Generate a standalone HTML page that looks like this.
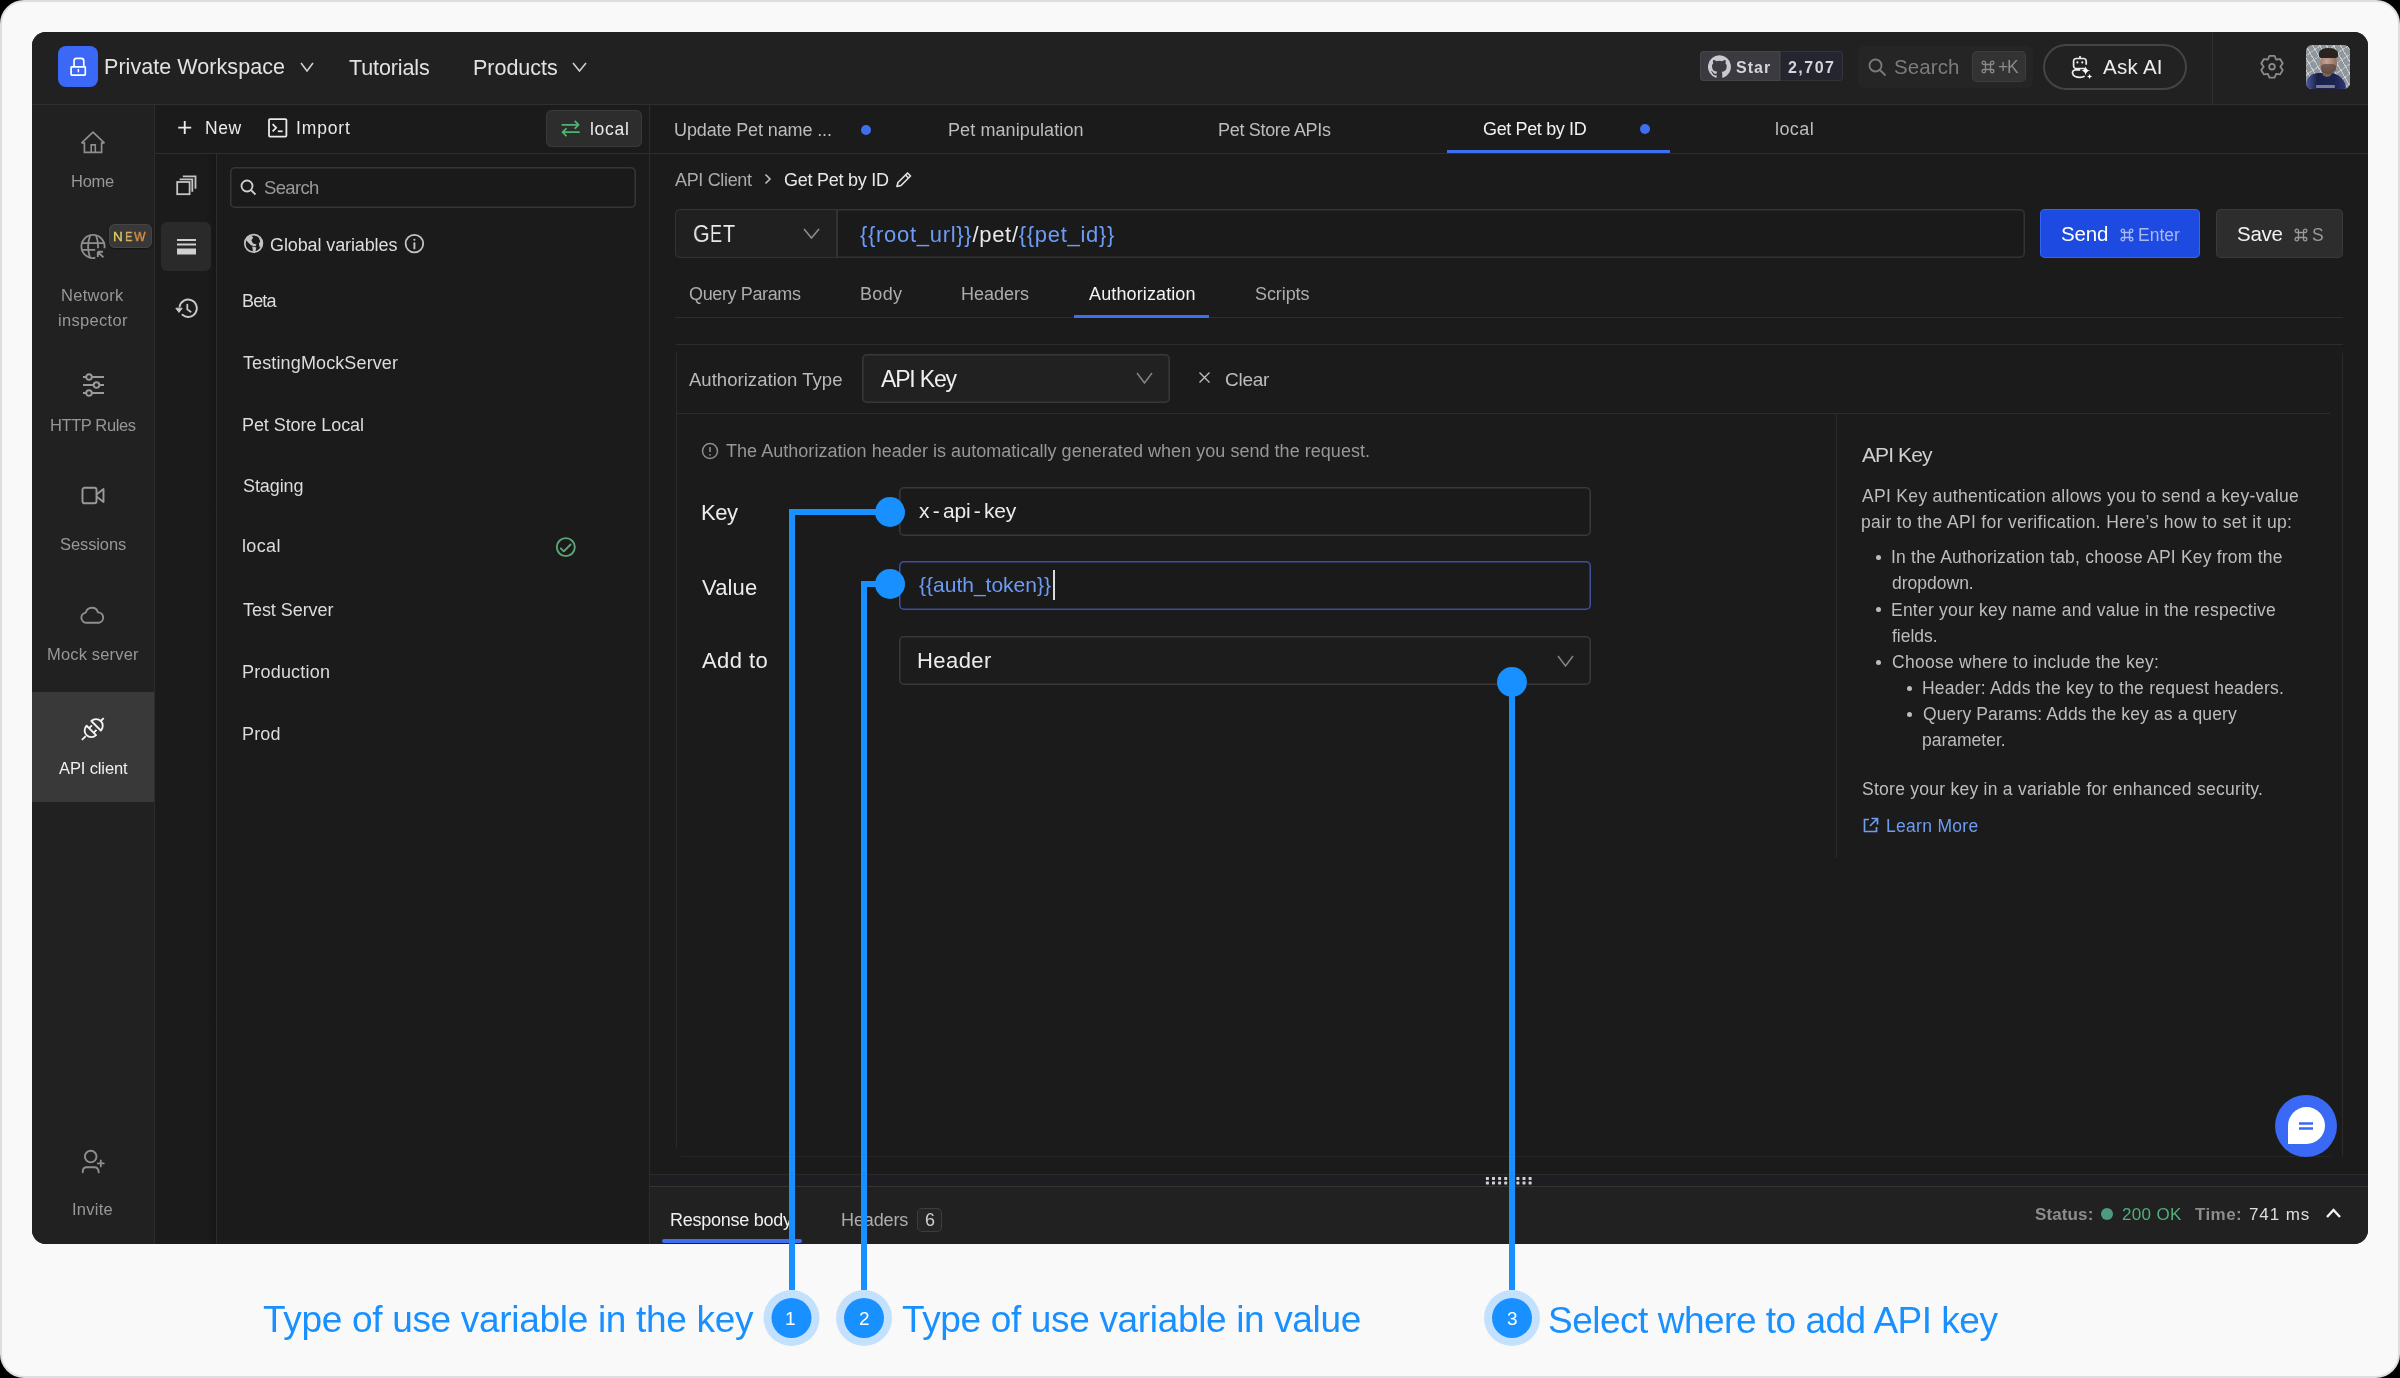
<!DOCTYPE html>
<html><head><meta charset="utf-8"><style>
html,body{margin:0;padding:0;width:2400px;height:1378px;overflow:hidden;background:#000;}
body{position:relative;font-family:"Liberation Sans",sans-serif;}
body>div,body>svg{position:absolute;}
.t{white-space:pre;will-change:transform;-webkit-font-smoothing:antialiased;}
</style></head><body>
<div style="left:0px;top:0px;width:2400px;height:1378px;background:#f9f9f9;border-radius:24px;box-sizing:border-box;border:2px solid #dedede"></div>
<div style="left:32px;top:32px;width:2336px;height:1212px;background:#1b1b1b;border-radius:14px;overflow:hidden"></div>
<div style="left:32px;top:32px;width:2336px;height:72px;background:#212121;border-radius:14px 14px 0 0"></div>
<div style="left:32px;top:104px;width:2336px;height:1px;background:#2f2f2f"></div>
<div style="left:2212px;top:32px;width:1px;height:72px;background:#2f2f2f"></div>
<div style="left:32px;top:105px;width:122px;height:1139px;background:#212121;border-radius:0 0 0 14px"></div>
<div style="left:154px;top:105px;width:1px;height:1139px;background:#2c2c2c"></div>
<div style="left:155px;top:154px;width:61px;height:1090px;background:#1b1b1b"></div>
<div style="left:205px;top:154px;width:11px;height:1090px;background:linear-gradient(90deg,rgba(0,0,0,0),rgba(0,0,0,.18))"></div>
<div style="left:216px;top:154px;width:1px;height:1090px;background:#2c2c2c"></div>
<div style="left:155px;top:105px;width:494px;height:48px;background:#1b1b1b"></div>
<div style="left:155px;top:153px;width:494px;height:1px;background:#2e2e2e"></div>
<div style="left:649px;top:105px;width:1px;height:1139px;background:#2c2c2c"></div>
<div style="left:650px;top:153px;width:1718px;height:1px;background:#2e2e2e"></div>
<div style="left:58px;top:46px;width:40px;height:41px;background:#3b68f6;border-radius:8px"></div>
<svg style="left:66px;top:54px;" width="24" height="26" viewBox="66 54 24 26" fill="none"><path d="M74 66.2V61a2.6 2.6 0 0 1 2.6-2.6h4.6A2.6 2.6 0 0 1 83.8 61v5.2" stroke="#fff" stroke-width="1.7"/><rect x="71.1" y="66.8" width="14.2" height="8.3" rx="0.6" stroke="#fff" stroke-width="1.7"/><path d="M78.4 69.6v2.2" stroke="#fff" stroke-width="1.5" stroke-linecap="round"/></svg>
<div class="t" style="left:104.00px;top:57px;font-size:21.5px;line-height:21.5px;color:#e2e2e2;font-weight:400;letter-spacing:0.058px;">Private Workspace</div>
<svg style="left:300px;top:62px;" width="14" height="10" viewBox="0 0 14 10" fill="none"><path d="M1 1L7.0 9L13 1" stroke="#cfcfcf" stroke-width="1.6" fill="none"/></svg>
<div class="t" style="left:349.00px;top:57.5px;font-size:21.5px;line-height:21.5px;color:#e2e2e2;font-weight:400;letter-spacing:-0.112px;">Tutorials</div>
<div class="t" style="left:473.00px;top:57.5px;font-size:21.5px;line-height:21.5px;color:#e2e2e2;font-weight:400;letter-spacing:-0.014px;">Products</div>
<svg style="left:572px;top:62px;" width="15" height="10" viewBox="0 0 15 10" fill="none"><path d="M1 1L7.5 9L14 1" stroke="#cfcfcf" stroke-width="1.6" fill="none"/></svg>
<div style="left:1700px;top:51px;width:80px;height:30px;background:#3a3a40;border-radius:4px 0 0 4px;box-shadow:inset 0 0 0 1px #44444a"></div>
<div style="left:1780px;top:51px;width:63px;height:30px;background:#25252f;border-radius:0 4px 4px 0;box-shadow:inset 0 0 0 1px #33333a"></div>
<svg style="left:1708px;top:55px;" width="23" height="23" viewBox="0 0 24 24" fill="none"><path fill="#c9c9d0" d="M12 .3a12 12 0 0 0-3.8 23.4c.6.1.8-.3.8-.6v-2c-3.3.7-4-1.6-4-1.6-.6-1.4-1.4-1.8-1.4-1.8-1-.7.1-.7.1-.7 1.2.1 1.8 1.2 1.8 1.2 1 1.8 2.8 1.3 3.5 1 0-.8.4-1.3.7-1.6-2.7-.3-5.5-1.3-5.5-6 0-1.2.5-2.3 1.3-3.1-.2-.4-.6-1.6 0-3.2 0 0 1-.3 3.4 1.2a11.5 11.5 0 0 1 6 0c2.3-1.5 3.3-1.2 3.3-1.2.6 1.6.2 2.8 0 3.2.9.8 1.3 1.9 1.3 3.2 0 4.6-2.8 5.6-5.5 5.9.5.4.9 1 .9 2.2v3.3c0 .3.1.7.8.6A12 12 0 0 0 12 .3"/></svg>
<div class="t" style="left:1736.00px;top:60px;font-size:16px;line-height:16px;color:#d4d4da;font-weight:700;letter-spacing:1.034px;">Star</div>
<div class="t" style="left:1788.00px;top:60px;font-size:16px;line-height:16px;color:#d4d4da;font-weight:700;letter-spacing:1.465px;">2,707</div>
<div style="left:1858px;top:46px;width:175px;height:42px;background:#252525;border-radius:6px"></div>
<svg style="left:1868px;top:58px;" width="19" height="19" viewBox="0 0 19 19" fill="none"><circle cx="7.5" cy="7.5" r="6" stroke="#7a7a7a" stroke-width="1.8"/><path d="M12 12l5.5 5.5" stroke="#7a7a7a" stroke-width="1.8"/></svg>
<div class="t" style="left:1894.00px;top:57.3px;font-size:20.5px;line-height:20.5px;color:#7c7c7c;font-weight:400;letter-spacing:0.090px;">Search</div>
<div style="left:1972px;top:51px;width:54px;height:31px;background:#333333;border-radius:5px;box-shadow:inset 0 0 0 1px #3d3d3d"></div>
<svg style="left:1981px;top:60px;" width="14" height="14" viewBox="0 0 14 14" fill="none"><path d="M4.5 4.5h5v5h-5z M4.5 4.5V2.8a1.7 1.7 0 1 0-1.7 1.7h1.7 M9.5 4.5V2.8a1.7 1.7 0 1 1 1.7 1.7H9.5 M4.5 9.5v1.7a1.7 1.7 0 1 1-1.7-1.7h1.7 M9.5 9.5v1.7a1.7 1.7 0 1 0 1.7-1.7H9.5" stroke="#8a8a8a" stroke-width="1.3"/></svg>
<div class="t" style="left:1997.70px;top:59px;font-size:17.5px;line-height:17.5px;color:#8a8a8a;font-weight:400;letter-spacing:0.000px;">+</div>
<div class="t" style="left:2007.40px;top:59px;font-size:17.5px;line-height:17.5px;color:#8a8a8a;font-weight:400;letter-spacing:0.000px;">K</div>
<div style="left:2043px;top:44px;width:144px;height:46px;border:2px solid #444;border-radius:23px;box-sizing:border-box;background:#222"></div>
<svg style="left:2064px;top:52px;" width="32" height="32" viewBox="2064 52 32 32" fill="none"><path d="M2085 68.5H2076.2A2.6 2.6 0 0 1 2073.6 65.9V61.1A2.6 2.6 0 0 1 2076.2 58.5H2083.6A2.6 2.6 0 0 1 2086.2 61.1V64.8" stroke="#eee" stroke-width="1.7"/><path d="M2080 56v2.5" stroke="#eee" stroke-width="1.7"/><circle cx="2077.4" cy="62.4" r="1.05" fill="#eee"/><circle cx="2082.3" cy="62.4" r="1.05" fill="#eee"/><path d="M2080.2 69.8H2075.4A3 3 0 0 0 2072.6 73.6C2073.4 76.6 2077 77.4 2080 77.4C2082 77.4 2083.6 77 2084.6 76.2" stroke="#eee" stroke-width="1.7"/><path d="M2085.6 66.2Q2086.2 70.2 2090.2 70.6Q2086.2 71.2 2085.6 75.2Q2085 71.2 2081.2 70.6Q2085 70.2 2085.6 66.2Z" fill="#fff"/><path d="M2089.6 74Q2089.9 76.2 2092.2 76.5Q2089.9 76.9 2089.6 79Q2089.2 76.9 2087 76.5Q2089.2 76.2 2089.6 74Z" fill="#fff"/></svg>
<div class="t" style="left:2103.00px;top:56.75px;font-size:20.5px;line-height:20.5px;color:#ececec;font-weight:400;letter-spacing:0.292px;">Ask AI</div>
<svg style="left:2256px;top:50px;" width="32" height="34" viewBox="2256 50 32 34" fill="none"><path d="M2269.48 55.79 L2274.52 55.79 L2276.15 59.51 L2280.19 59.06 L2282.71 63.43 L2280.30 66.70 L2282.71 69.97 L2280.19 74.34 L2276.15 73.89 L2274.52 77.61 L2269.48 77.61 L2267.85 73.89 L2263.81 74.34 L2261.29 69.97 L2263.70 66.70 L2261.29 63.43 L2263.81 59.06 L2267.85 59.51Z" stroke="#8c8c8c" stroke-width="1.8" stroke-linejoin="round"/><circle cx="2272" cy="66.7" r="2.8" stroke="#8c8c8c" stroke-width="1.8"/></svg>
<div style="left:2306px;top:45px;width:44px;height:44px;border-radius:6px;overflow:hidden;background:#8f979c"><div style="position:absolute;left:0px;top:0px;width:44px;height:44px;background:repeating-linear-gradient(60deg,rgba(255,255,255,0) 0 3px,rgba(235,240,242,.6) 3px 4px,rgba(255,255,255,0) 4px 6px),repeating-linear-gradient(-35deg,rgba(255,255,255,0) 0 4px,rgba(225,232,235,.5) 4px 5px,rgba(255,255,255,0) 5px 8px)"></div><div style="position:absolute;left:0px;top:28px;width:40px;height:30px;border-radius:12px 16px 0 0;background:linear-gradient(90deg,#4b5ba2 0,#1a2148 28%,#1c2350 70%,#2f3772 100%)"></div><div style="position:absolute;left:16px;top:23px;width:10px;height:9px;background:#7f6256;border-radius:0 0 5px 5px"></div><div style="position:absolute;left:14px;top:7px;width:17px;height:21px;background:radial-gradient(ellipse at 40% 45%,#c8a596 0,#9d7868 55%,#73554a 100%);border-radius:50% 50% 45% 45%"></div><div style="position:absolute;left:15px;top:19px;width:15px;height:10px;background:#4a3a33;border-radius:30% 30% 50% 50%;opacity:.6"></div><div style="position:absolute;left:13px;top:3px;width:19px;height:10px;background:#2a2420;border-radius:50% 50% 20% 20%"></div><div style="position:absolute;left:10px;top:39.5px;width:19px;height:3.5px;background:#b9bcc8;opacity:.6;border-radius:1px"></div></div>
<svg style="left:76px;top:124px;" width="34" height="34" viewBox="76 124 34 34" fill="none"><path d="M82 142.6L93 132.2l11 10.4" stroke="#8e8e8e" stroke-width="1.7" stroke-linejoin="round" stroke-linecap="round"/><path d="M81.8 142.8h2.6v9.6h17.2v-9.6h2.6" stroke="#8e8e8e" stroke-width="1.7" stroke-linejoin="round"/><path d="M91.2 152.4v-7.5h4.1v7.5" stroke="#8e8e8e" stroke-width="1.6"/></svg>
<div class="t" style="left:71.00px;top:172.5px;font-size:16.5px;line-height:16.5px;color:#979797;font-weight:400;letter-spacing:-0.279px;">Home</div>
<svg style="left:76px;top:226px;" width="36" height="36" viewBox="76 226 36 36" fill="none"><defs><clipPath id="gcl"><path d="M70 220H112V248.2H95.2V270H70z"/></clipPath></defs><g clip-path="url(#gcl)" stroke="#8e8e8e" stroke-width="1.8"><circle cx="93" cy="246.5" r="11.6"/><path d="M81.5 243.2H104.5M81.5 249.9H104.5"/><path d="M90.2 235.2c-2.6 7-2.6 15.6 0 22.8M96 235.2c2.6 7 2.6 15.6 0 22.8"/></g><path d="M97.8 251.8h5.2M97.8 251.8v5.2M98.2 252.2l5.2 5.2" stroke="#8e8e8e" stroke-width="1.9"/></svg>
<div style="left:109px;top:224px;width:43px;height:24px;background:#383838;border-radius:6px;box-shadow:inset 0 0 0 1px #454545,0 1px 2px rgba(0,0,0,.5)"></div>
<div class="t" style="left:112.90px;top:229.9px;font-size:13.5px;line-height:13.5px;color:#e2cf62;font-weight:400;letter-spacing:0.000px;transform:scaleX(1.0);transform-origin:0 0;-webkit-text-stroke:0.3px #e2cf62">N</div>
<div class="t" style="left:124.50px;top:229.9px;font-size:13.5px;line-height:13.5px;color:#d8b060;font-weight:400;letter-spacing:0.000px;transform:scaleX(.82);transform-origin:0 0;-webkit-text-stroke:0.3px #d8b060">E</div>
<div class="t" style="left:133.90px;top:229.9px;font-size:13.5px;line-height:13.5px;color:#e49148;font-weight:400;letter-spacing:0.000px;transform:scaleX(.9);transform-origin:0 0;-webkit-text-stroke:0.3px #e49148">W</div>
<div class="t" style="left:61.00px;top:287px;font-size:16.5px;line-height:16.5px;color:#979797;font-weight:400;letter-spacing:0.289px;">Network</div>
<div class="t" style="left:57.50px;top:311.6px;font-size:16.5px;line-height:16.5px;color:#979797;font-weight:400;letter-spacing:0.318px;">inspector</div>
<svg style="left:82px;top:373px;" width="23" height="26" viewBox="0 0 23 26" fill="none"><path d="M1 4h21M1 12h21M1 20h21" stroke="#9a9a9a" stroke-width="1.9"/><circle cx="7" cy="4" r="2.8" fill="#212121" stroke="#9a9a9a" stroke-width="1.9"/><circle cx="14.5" cy="12" r="2.8" fill="#212121" stroke="#9a9a9a" stroke-width="1.9"/><circle cx="7" cy="20" r="2.8" fill="#212121" stroke="#9a9a9a" stroke-width="1.9"/></svg>
<div class="t" style="left:49.60px;top:417px;font-size:16.5px;line-height:16.5px;color:#979797;font-weight:400;letter-spacing:-0.400px;">HTTP Rules</div>
<svg style="left:81px;top:486px;" width="25" height="19" viewBox="0 0 25 19" fill="none"><rect x="1.5" y="1.8" width="14" height="15.5" rx="2" stroke="#9a9a9a" stroke-width="1.9"/><path d="M15.5 8.5l7-5.5v13l-7-5.5" stroke="#9a9a9a" stroke-width="1.9" stroke-linejoin="round"/></svg>
<div class="t" style="left:60.00px;top:536px;font-size:16.5px;line-height:16.5px;color:#979797;font-weight:400;letter-spacing:-0.100px;">Sessions</div>
<svg style="left:76px;top:600px;" width="34" height="28" viewBox="76 600 34 28" fill="none"><path d="M87 622.7H99A5.2 5.2 0 0 0 98 612.4A6.3 6.3 0 0 0 85.8 612.6A5 5 0 0 0 87 622.7Z" stroke="#8e8e8e" stroke-width="1.9" stroke-linejoin="round"/></svg>
<div class="t" style="left:46.50px;top:645.5px;font-size:16.5px;line-height:16.5px;color:#979797;font-weight:400;letter-spacing:0.165px;">Mock server</div>
<div style="left:32px;top:692px;width:122px;height:110px;background:#393939"></div>
<svg style="left:76px;top:710px;" width="34" height="36" viewBox="76 710 34 36" fill="none"><g transform="translate(93 728.8) rotate(-45) scale(1.08)" stroke="#f4f4f4" stroke-width="1.7" stroke-linejoin="round"><path d="M-14.5 0H-9.5"/><path d="M-2.2 -6.2A6.2 6.2 0 0 0 -2.2 6.2Z"/><path d="M-2.2 -3H1.6M-2.2 3H1.6"/><path d="M4 -6.2A6.2 6.2 0 0 1 4 6.2Z"/><path d="M10.2 0H14"/></g></svg>
<div class="t" style="left:58.75px;top:759.75px;font-size:16.5px;line-height:16.5px;color:#f0f0f0;font-weight:400;letter-spacing:-0.124px;">API client</div>
<svg style="left:76px;top:1144px;" width="34" height="34" viewBox="76 1144 34 34" fill="none"><circle cx="90.7" cy="1156.6" r="5.8" stroke="#8e8e8e" stroke-width="1.9"/><path d="M82.8 1172.3V1171Q83 1167.2 86.8 1167.2H94.6Q98.2 1167.2 98.8 1172.3" stroke="#8e8e8e" stroke-width="1.9" stroke-linecap="round"/><path d="M100.8 1160.4v6M97.8 1163.4h6" stroke="#8e8e8e" stroke-width="1.8" stroke-linecap="round"/></svg>
<div class="t" style="left:72.00px;top:1200.7px;font-size:16.5px;line-height:16.5px;color:#979797;font-weight:400;letter-spacing:0.268px;">Invite</div>
<svg style="left:176px;top:119px;" width="18" height="18" viewBox="176 119 18 18" fill="none"><path d="M184.75 121.1v13M178.2 127.6h13" stroke="#eaeaea" stroke-width="1.9"/></svg>
<div class="t" style="left:204.60px;top:120px;font-size:17.5px;line-height:17.5px;color:#eaeaea;font-weight:400;letter-spacing:0.515px;">New</div>
<svg style="left:266px;top:116px;" width="24" height="24" viewBox="266 116 24 24" fill="none"><rect x="269" y="119.1" width="17.4" height="17.5" rx="1" stroke="#eaeaea" stroke-width="1.8"/><path d="M272.6 124.2l3.6 3.6-3.6 3.6" stroke="#eaeaea" stroke-width="1.7"/><path d="M277.8 131.3h4.8" stroke="#eaeaea" stroke-width="1.7"/></svg>
<div class="t" style="left:296.30px;top:120px;font-size:17.5px;line-height:17.5px;color:#eaeaea;font-weight:400;letter-spacing:0.853px;">Import</div>
<div style="left:546px;top:110px;width:96px;height:37px;background:#2d2d2d;border-radius:6px;box-shadow:inset 0 0 0 1px #3a3a3a"></div>
<svg style="left:558px;top:116px;" width="26" height="24" viewBox="558 116 26 24" fill="none"><path d="M562.3 124.8H578.2M575.2 121.4L578.6 124.8L575.2 128.2M579 132.2H563M566 128.8L562.6 132.2L566 135.6" stroke="#4fb46e" stroke-width="1.8" stroke-linecap="round" stroke-linejoin="round"/></svg>
<div class="t" style="left:590.00px;top:121px;font-size:17.5px;line-height:17.5px;color:#ececec;font-weight:400;letter-spacing:0.724px;">local</div>
<svg style="left:170px;top:170px;" width="32" height="30" viewBox="170 170 32 30" fill="none"><rect x="177.2" y="182" width="12.4" height="12.2" stroke="#c4c4c4" stroke-width="1.8"/><path d="M179.6 179.4H192.3V191.8M182.8 176.3H195.5V188.8" stroke="#c4c4c4" stroke-width="1.8"/></svg>
<div style="left:161px;top:222px;width:50px;height:49px;background:#2a2a2a;border-radius:6px"></div>
<svg style="left:177px;top:239px;" width="19" height="16" viewBox="0 0 19 16" fill="none"><path d="M0 1h19M0 5.5h19" stroke="#d0d0d0" stroke-width="2"/><rect x="0" y="9.5" width="19" height="6" fill="#d0d0d0"/></svg>
<svg style="left:170px;top:294px;" width="34" height="30" viewBox="170 294 34 30" fill="none"><path d="M179.6 306.6A8.7 8.7 0 1 1 182.4 314.8" stroke="#c8c8c8" stroke-width="1.9" stroke-linecap="round"/><path d="M175.8 308.2h6.4l-3.2 4.2z" fill="#c8c8c8" stroke="#c8c8c8" stroke-width="1" stroke-linejoin="round"/><path d="M187.3 304.6v4.8l3.3 2.4" stroke="#c8c8c8" stroke-width="1.8" stroke-linecap="round"/></svg>
<div style="left:230px;top:167px;width:406px;height:41px;border-radius:5px;box-shadow:inset 0 0 0 1.5px #363636;background:#1a1a1a"></div>
<svg style="left:240px;top:179px;" width="17" height="17" viewBox="0 0 17 17" fill="none"><circle cx="7" cy="7" r="5.5" stroke="#cfcfcf" stroke-width="1.8"/><path d="M11 11l4.5 4.5" stroke="#cfcfcf" stroke-width="1.8"/></svg>
<div class="t" style="left:264.20px;top:179.4px;font-size:18.5px;line-height:18.5px;color:#9a9a9a;font-weight:400;letter-spacing:-0.666px;">Search</div>
<svg style="left:240px;top:230px;" width="28" height="28" viewBox="240 230 28 28" fill="none"><circle cx="253.6" cy="243.4" r="8.8" stroke="#c4c4c4" stroke-width="1.7"/><path d="M247.2 237.4L251.2 235.6L253.2 237.6L251.4 240.2L252.8 243.2L256.6 244.6L255.2 246.6L251 245.2L248.2 242.4L246 240z" fill="#c4c4c4"/><path d="M252.2 246.6L256.4 247.4L255.6 250.6L254.4 252.6L252.8 250.2z" fill="#c4c4c4"/><path d="M258.4 236.6Q262.6 239.6 262.4 245.6L260 248L258.8 244L260.2 241.2z" fill="#c4c4c4"/></svg>
<div class="t" style="left:270.30px;top:236px;font-size:18px;line-height:18px;color:#dedede;font-weight:400;letter-spacing:-0.111px;">Global variables</div>
<svg style="left:402px;top:231px;" width="26" height="26" viewBox="402 231 26 26" fill="none"><circle cx="414.4" cy="243.6" r="8.8" stroke="#c4c4c4" stroke-width="1.8"/><path d="M414.4 243.2v5.2" stroke="#c4c4c4" stroke-width="1.9" stroke-linecap="round"/><circle cx="414.4" cy="239.8" r="1.05" fill="#c4c4c4"/></svg>
<div class="t" style="left:241.80px;top:292.25px;font-size:18px;line-height:18px;color:#dcdcdc;font-weight:400;letter-spacing:-0.839px;">Beta</div>
<div class="t" style="left:242.80px;top:354px;font-size:18px;line-height:18px;color:#dcdcdc;font-weight:400;letter-spacing:0.121px;">TestingMockServer</div>
<div class="t" style="left:241.80px;top:416px;font-size:18px;line-height:18px;color:#dcdcdc;font-weight:400;letter-spacing:-0.077px;">Pet Store Local</div>
<div class="t" style="left:242.80px;top:477.25px;font-size:18px;line-height:18px;color:#dcdcdc;font-weight:400;letter-spacing:-0.090px;">Staging</div>
<div class="t" style="left:241.80px;top:537px;font-size:18px;line-height:18px;color:#dcdcdc;font-weight:400;letter-spacing:0.370px;">local</div>
<div class="t" style="left:242.80px;top:601.25px;font-size:18px;line-height:18px;color:#dcdcdc;font-weight:400;letter-spacing:-0.053px;">Test Server</div>
<div class="t" style="left:241.80px;top:663px;font-size:18px;line-height:18px;color:#dcdcdc;font-weight:400;letter-spacing:0.217px;">Production</div>
<div class="t" style="left:241.80px;top:725px;font-size:18px;line-height:18px;color:#dcdcdc;font-weight:400;letter-spacing:0.163px;">Prod</div>
<svg style="left:553px;top:534px;" width="26" height="26" viewBox="553 534 26 26" fill="none"><circle cx="565.8" cy="547.1" r="9" stroke="#5ba674" stroke-width="1.9"/><path d="M560.8 548.3l3 3 6.8-6.8" stroke="#5ba674" stroke-width="1.9" stroke-linecap="round" stroke-linejoin="round"/></svg>
<div class="t" style="left:674.00px;top:121px;font-size:18px;line-height:18px;color:#bdbdbd;font-weight:400;letter-spacing:-0.116px;">Update Pet name ...</div>
<div style="left:861px;top:125px;width:10px;height:10px;background:#3d6ff0;border-radius:50%"></div>
<div class="t" style="left:948.00px;top:121px;font-size:18px;line-height:18px;color:#bdbdbd;font-weight:400;letter-spacing:0.095px;">Pet manipulation</div>
<div class="t" style="left:1218.00px;top:121px;font-size:18px;line-height:18px;color:#bdbdbd;font-weight:400;letter-spacing:-0.312px;">Pet Store APIs</div>
<div class="t" style="left:1483.30px;top:120.30000000000001px;font-size:18px;line-height:18px;color:#f2f2f2;font-weight:400;letter-spacing:-0.362px;">Get Pet by ID</div>
<div style="left:1640px;top:124px;width:10px;height:10px;background:#3d6ff0;border-radius:50%"></div>
<div style="left:1447px;top:150px;width:223px;height:3px;background:#3d6ff0"></div>
<div class="t" style="left:1775.30px;top:120.30000000000001px;font-size:18px;line-height:18px;color:#bdbdbd;font-weight:400;letter-spacing:0.420px;">local</div>
<div class="t" style="left:675.00px;top:171px;font-size:18px;line-height:18px;color:#ababab;font-weight:400;letter-spacing:-0.337px;">API Client</div>
<svg style="left:764px;top:173px;" width="8" height="12" viewBox="0 0 8 12" fill="none"><path d="M1.5 1.5l4.5 4.5-4.5 4.5" stroke="#bdbdbd" stroke-width="1.6"/></svg>
<div class="t" style="left:784.00px;top:171px;font-size:18px;line-height:18px;color:#e8e8e8;font-weight:400;letter-spacing:-0.254px;">Get Pet by ID</div>
<svg style="left:895px;top:171px;" width="18" height="17" viewBox="0 0 18 17" fill="none"><path d="M2 15.5l1-4L12.5 2l3 3L6 14.5z" stroke="#e0e0e0" stroke-width="1.7" stroke-linejoin="round"/><path d="M10.5 4l3 3" stroke="#e0e0e0" stroke-width="1.7"/></svg>
<div style="left:675px;top:209px;width:1350px;height:49px;border-radius:5px;box-shadow:inset 0 0 0 1.5px #333;background:#1a1a1a"></div>
<div style="left:676px;top:210px;width:160px;height:47px;background:#202020;border-radius:5px 0 0 5px"></div>
<div style="left:836px;top:209px;width:1.5px;height:49px;background:#333"></div>
<div class="t" style="left:693.00px;top:222.5px;font-size:23px;line-height:23px;color:#e8e8e8;font-weight:400;letter-spacing:0.000px;transform:scaleX(.93);transform-origin:0 0">G</div>
<div class="t" style="left:710.00px;top:222.5px;font-size:23px;line-height:23px;color:#e8e8e8;font-weight:400;letter-spacing:0.000px;transform:scaleX(.78);transform-origin:0 0">E</div>
<div class="t" style="left:723.30px;top:222.5px;font-size:23px;line-height:23px;color:#e8e8e8;font-weight:400;letter-spacing:0.000px;transform:scaleX(.86);transform-origin:0 0">T</div>
<svg style="left:803px;top:228px;" width="17" height="11" viewBox="0 0 17 11" fill="none"><path d="M1 1L8.5 10L16 1" stroke="#8c8c8c" stroke-width="1.6" fill="none"/></svg>
<div class="t" style="left:860.00px;top:224px;font-size:22px;line-height:22px;color:#e8e8e8;font-weight:400;letter-spacing:0.701px;"><span style="color:#6d9cf7">{{root_url}}</span>/pet/<span style="color:#6d9cf7">{{pet_id}}</span></div>
<div style="left:2040px;top:209px;width:160px;height:49px;background:#1d4ae0;border-radius:5px;box-shadow:inset 0 0 0 1px #3565f2"></div>
<div class="t" style="left:2061.00px;top:224px;font-size:20.5px;line-height:20.5px;color:#ffffff;font-weight:400;letter-spacing:-0.159px;">Send</div>
<svg style="left:2120px;top:228px;" width="14" height="14" viewBox="0 0 14 14" fill="none"><path d="M4.5 4.5h5v5h-5z M4.5 4.5V2.8a1.7 1.7 0 1 0-1.7 1.7h1.7 M9.5 4.5V2.8a1.7 1.7 0 1 1 1.7 1.7H9.5 M4.5 9.5v1.7a1.7 1.7 0 1 1-1.7-1.7h1.7 M9.5 9.5v1.7a1.7 1.7 0 1 0 1.7-1.7H9.5" stroke="#a9b9f2" stroke-width="1.3"/></svg>
<div class="t" style="left:2138.00px;top:226.5px;font-size:17.5px;line-height:17.5px;color:#a9b9f2;font-weight:400;letter-spacing:0.000px;">Enter</div>
<div style="left:2216px;top:209px;width:127px;height:49px;background:#2d2d2d;border-radius:5px;box-shadow:inset 0 0 0 1px #3a3a3a"></div>
<div class="t" style="left:2236.50px;top:224px;font-size:20.5px;line-height:20.5px;color:#f2f2f2;font-weight:400;letter-spacing:-0.275px;">Save</div>
<svg style="left:2294px;top:228px;" width="14" height="14" viewBox="0 0 14 14" fill="none"><path d="M4.5 4.5h5v5h-5z M4.5 4.5V2.8a1.7 1.7 0 1 0-1.7 1.7h1.7 M9.5 4.5V2.8a1.7 1.7 0 1 1 1.7 1.7H9.5 M4.5 9.5v1.7a1.7 1.7 0 1 1-1.7-1.7h1.7 M9.5 9.5v1.7a1.7 1.7 0 1 0 1.7-1.7H9.5" stroke="#9a9a9a" stroke-width="1.3"/></svg>
<div class="t" style="left:2312.00px;top:226.5px;font-size:17.5px;line-height:17.5px;color:#9a9a9a;font-weight:400;letter-spacing:0.000px;">S</div>
<div class="t" style="left:689.00px;top:285px;font-size:18px;line-height:18px;color:#adadad;font-weight:400;letter-spacing:-0.367px;">Query Params</div>
<div class="t" style="left:860.00px;top:285px;font-size:18px;line-height:18px;color:#adadad;font-weight:400;letter-spacing:0.324px;">Body</div>
<div class="t" style="left:961.00px;top:285px;font-size:18px;line-height:18px;color:#adadad;font-weight:400;letter-spacing:-0.006px;">Headers</div>
<div class="t" style="left:1089.00px;top:285px;font-size:18px;line-height:18px;color:#f2f2f2;font-weight:400;letter-spacing:0.121px;">Authorization</div>
<div class="t" style="left:1254.50px;top:285px;font-size:18px;line-height:18px;color:#adadad;font-weight:400;letter-spacing:-0.085px;">Scripts</div>
<div style="left:675px;top:317px;width:1668px;height:1px;background:#2e2e2e"></div>
<div style="left:1074px;top:315px;width:135px;height:3px;background:#3d6ff0"></div>
<div style="left:676px;top:344px;width:1667px;height:1px;background:#2c2c2c"></div>
<div style="left:676px;top:352px;width:1px;height:796px;background:#2a2a2a"></div>
<div style="left:2342px;top:353px;width:1px;height:803px;background:#2a2a2a"></div>
<div class="t" style="left:689.00px;top:371px;font-size:18.5px;line-height:18.5px;color:#bababa;font-weight:400;letter-spacing:0.033px;">Authorization Type</div>
<div style="left:862px;top:354px;width:308px;height:49px;background:#212121;border-radius:5px;box-shadow:inset 0 0 0 1.5px #383838"></div>
<div class="t" style="left:881.00px;top:367.7px;font-size:23px;line-height:23px;color:#efefef;font-weight:400;letter-spacing:-1.182px;">API Key</div>
<svg style="left:1136px;top:372px;" width="17" height="12" viewBox="0 0 17 12" fill="none"><path d="M1 1L8.5 11L16 1" stroke="#858585" stroke-width="1.5" fill="none"/></svg>
<svg style="left:1198px;top:371px;" width="13" height="13" viewBox="0 0 13 13" fill="none"><path d="M1.5 1.5l10 10M11.5 1.5l-10 10" stroke="#bdbdbd" stroke-width="1.4"/></svg>
<div class="t" style="left:1225.00px;top:369.5px;font-size:19px;line-height:19px;color:#bdbdbd;font-weight:400;letter-spacing:-0.269px;">Clear</div>
<div style="left:677px;top:413px;width:1653px;height:1px;background:#2c2c2c"></div>
<div style="left:1836px;top:414px;width:1px;height:444px;background:#2a2a2a"></div>
<svg style="left:701px;top:442px;" width="18" height="18" viewBox="0 0 18 18" fill="none"><circle cx="9" cy="9" r="7.5" stroke="#8e8e8e" stroke-width="1.5"/><path d="M9 5v5" stroke="#8e8e8e" stroke-width="1.6"/><circle cx="9" cy="12.8" r="0.9" fill="#8e8e8e"/></svg>
<div class="t" style="left:726.00px;top:442px;font-size:18px;line-height:18px;color:#979797;font-weight:400;letter-spacing:0.034px;">The Authorization header is automatically generated when you send the request.</div>
<div class="t" style="left:701.00px;top:501.5px;font-size:22px;line-height:22px;color:#ececec;font-weight:400;letter-spacing:-0.455px;">Key</div>
<div class="t" style="left:702.00px;top:576.5px;font-size:22px;line-height:22px;color:#ececec;font-weight:400;letter-spacing:0.150px;">Value</div>
<div class="t" style="left:702.00px;top:650px;font-size:22px;line-height:22px;color:#ececec;font-weight:400;letter-spacing:0.426px;">Add to</div>
<div style="left:899px;top:487px;width:692px;height:49px;background:#1a1a1a;border-radius:5px;box-shadow:inset 0 0 0 1.5px #383838"></div>
<div class="t" style="left:919.00px;top:499.5px;font-size:21px;line-height:21px;color:#ececec;font-weight:400;letter-spacing:-0.242px;">x<span style="margin:0 3.5px">-</span>api<span style="margin:0 3.5px">-</span>key</div>
<div style="left:899px;top:561px;width:692px;height:49px;background:#1a1a1a;border-radius:5px;box-shadow:inset 0 0 0 1.5px #3f4f9c"></div>
<div class="t" style="left:919.00px;top:574px;font-size:21px;line-height:21px;color:#6d9cf7;font-weight:400;letter-spacing:0.003px;">{{auth_token}}</div>
<div style="left:1053px;top:570px;width:1.5px;height:30px;background:#dcdcdc"></div>
<div style="left:899px;top:636px;width:692px;height:49px;background:#1c1c1c;border-radius:5px;box-shadow:inset 0 0 0 1.5px #383838"></div>
<div class="t" style="left:917.00px;top:650px;font-size:22px;line-height:22px;color:#ececec;font-weight:400;letter-spacing:0.434px;">Header</div>
<svg style="left:1557px;top:655px;" width="17" height="12" viewBox="0 0 17 12" fill="none"><path d="M1 1L8.5 11L16 1" stroke="#858585" stroke-width="1.5" fill="none"/></svg>
<div class="t" style="left:1862.00px;top:444px;font-size:21px;line-height:21px;color:#cfcfcf;font-weight:400;letter-spacing:-0.895px;">API Key</div>
<div class="t" style="left:1862.00px;top:487.6px;font-size:17.5px;line-height:17.5px;color:#bdbdbd;font-weight:400;letter-spacing:0.317px;">API Key authentication allows you to send a key-value</div>
<div class="t" style="left:1861.00px;top:513.7px;font-size:17.5px;line-height:17.5px;color:#bdbdbd;font-weight:400;letter-spacing:0.347px;">pair to the API for verification. Here’s how to set it up:</div>
<div class="t" style="left:1891.40px;top:549.3px;font-size:17.5px;line-height:17.5px;color:#bdbdbd;font-weight:400;letter-spacing:0.210px;">In the Authorization tab, choose API Key from the</div>
<div class="t" style="left:1892.40px;top:575.2px;font-size:17.5px;line-height:17.5px;color:#bdbdbd;font-weight:400;letter-spacing:0.000px;">dropdown.</div>
<div class="t" style="left:1891.40px;top:601.6px;font-size:17.5px;line-height:17.5px;color:#bdbdbd;font-weight:400;letter-spacing:0.222px;">Enter your key name and value in the respective</div>
<div class="t" style="left:1892.40px;top:627.5px;font-size:17.5px;line-height:17.5px;color:#bdbdbd;font-weight:400;letter-spacing:0.000px;">fields.</div>
<div class="t" style="left:1892.40px;top:654px;font-size:17.5px;line-height:17.5px;color:#bdbdbd;font-weight:400;letter-spacing:0.261px;">Choose where to include the key:</div>
<div class="t" style="left:1922.40px;top:680px;font-size:17.5px;line-height:17.5px;color:#bdbdbd;font-weight:400;letter-spacing:0.226px;">Header: Adds the key to the request headers.</div>
<div class="t" style="left:1923.40px;top:706.4px;font-size:17.5px;line-height:17.5px;color:#bdbdbd;font-weight:400;letter-spacing:0.124px;">Query Params: Adds the key as a query</div>
<div class="t" style="left:1922.40px;top:732.25px;font-size:17.5px;line-height:17.5px;color:#bdbdbd;font-weight:400;letter-spacing:0.000px;">parameter.</div>
<div style="left:1876.1px;top:555.0px;width:5px;height:5px;background:#bdbdbd;border-radius:50%"></div>
<div style="left:1876.1px;top:607.3px;width:5px;height:5px;background:#bdbdbd;border-radius:50%"></div>
<div style="left:1876.1px;top:659.7px;width:5px;height:5px;background:#bdbdbd;border-radius:50%"></div>
<div style="left:1907.1px;top:685.7px;width:5px;height:5px;background:#bdbdbd;border-radius:50%"></div>
<div style="left:1907.1px;top:712.1px;width:5px;height:5px;background:#bdbdbd;border-radius:50%"></div>
<div class="t" style="left:1862.00px;top:780.8px;font-size:17.5px;line-height:17.5px;color:#bdbdbd;font-weight:400;letter-spacing:0.261px;">Store your key in a variable for enhanced security.</div>
<svg style="left:1862px;top:817px;" width="17" height="17" viewBox="0 0 17 17" fill="none"><path d="M7 2.5H2.5v12h12V10" stroke="#6e9cf0" stroke-width="1.7"/><path d="M9.5 1.5h6v6M15.5 1.5L8 9" stroke="#6e9cf0" stroke-width="1.7"/></svg>
<div class="t" style="left:1886.00px;top:817.7px;font-size:17.5px;line-height:17.5px;color:#6e9cf0;font-weight:400;letter-spacing:0.305px;">Learn More</div>
<div style="left:681px;top:1156px;width:1650px;height:1px;background:#262626"></div>
<div style="left:650px;top:1174px;width:1718px;height:1px;background:#2a2a2a"></div>
<div style="left:650px;top:1175px;width:1718px;height:11px;background:#1e1e22"></div>
<div style="left:650px;top:1186px;width:1718px;height:1.5px;background:#353535"></div>
<div style="left:650px;top:1187px;width:1718px;height:57px;background:#212121;border-radius:0 0 14px 0"></div>
<svg style="left:1480px;top:1172px;" width="60" height="18" viewBox="1480 1172 60 18" fill="none"><rect x="1485.90" y="1176.90" width="3" height="3" rx="0.4" fill="#d2d2d2"/><rect x="1485.90" y="1181.50" width="3" height="3" rx="0.4" fill="#d2d2d2"/><rect x="1492.00" y="1176.90" width="3" height="3" rx="0.4" fill="#d2d2d2"/><rect x="1492.00" y="1181.50" width="3" height="3" rx="0.4" fill="#d2d2d2"/><rect x="1498.10" y="1176.90" width="3" height="3" rx="0.4" fill="#d2d2d2"/><rect x="1498.10" y="1181.50" width="3" height="3" rx="0.4" fill="#d2d2d2"/><rect x="1504.20" y="1176.90" width="3" height="3" rx="0.4" fill="#d2d2d2"/><rect x="1504.20" y="1181.50" width="3" height="3" rx="0.4" fill="#d2d2d2"/><rect x="1510.30" y="1176.90" width="3" height="3" rx="0.4" fill="#d2d2d2"/><rect x="1510.30" y="1181.50" width="3" height="3" rx="0.4" fill="#d2d2d2"/><rect x="1516.40" y="1176.90" width="3" height="3" rx="0.4" fill="#d2d2d2"/><rect x="1516.40" y="1181.50" width="3" height="3" rx="0.4" fill="#d2d2d2"/><rect x="1522.50" y="1176.90" width="3" height="3" rx="0.4" fill="#d2d2d2"/><rect x="1522.50" y="1181.50" width="3" height="3" rx="0.4" fill="#d2d2d2"/><rect x="1528.60" y="1176.90" width="3" height="3" rx="0.4" fill="#d2d2d2"/><rect x="1528.60" y="1181.50" width="3" height="3" rx="0.4" fill="#d2d2d2"/></svg>
<div class="t" style="left:669.50px;top:1211px;font-size:18px;line-height:18px;color:#f0f0f0;font-weight:400;letter-spacing:-0.257px;">Response body</div>
<div style="left:662px;top:1239px;width:140px;height:3.5px;background:#3d6ff0;border-radius:2px"></div>
<div class="t" style="left:840.70px;top:1211px;font-size:18px;line-height:18px;color:#adadad;font-weight:400;letter-spacing:-0.123px;">Headers</div>
<div style="left:917px;top:1207.5px;width:25px;height:24px;border-radius:5px;box-shadow:inset 0 0 0 1px #3c3c3c;background:#262626"></div>
<div class="t" style="left:925.00px;top:1211px;font-size:18px;line-height:18px;color:#cfcfcf;font-weight:400;letter-spacing:0.000px;">6</div>
<div class="t" style="left:2035.30px;top:1206px;font-size:17px;line-height:17px;color:#8c8c8c;font-weight:700;letter-spacing:0.124px;">Status:</div>
<div style="left:2101px;top:1208px;width:12.4px;height:12.4px;background:#4e9a80;border-radius:50%"></div>
<div class="t" style="left:2121.80px;top:1206px;font-size:17px;line-height:17px;color:#4fb07a;font-weight:400;letter-spacing:0.338px;">200 OK</div>
<div class="t" style="left:2195.00px;top:1206px;font-size:17px;line-height:17px;color:#8c8c8c;font-weight:700;letter-spacing:0.407px;">Time:</div>
<div class="t" style="left:2248.70px;top:1206px;font-size:17px;line-height:17px;color:#dedede;font-weight:400;letter-spacing:0.910px;">741 ms</div>
<svg style="left:2325px;top:1207px;" width="17" height="12" viewBox="0 0 17 12" fill="none"><path d="M2 10l6.5-7 6.5 7" stroke="#f2f2f2" stroke-width="2.4"/></svg>
<div style="left:2275px;top:1095px;width:62px;height:62px;background:#3a6af5;border-radius:50%"></div>
<svg style="left:2288px;top:1107px;" width="37" height="37" viewBox="0 0 37 37" fill="none"><path d="M0 18.5A18.5 18.5 0 1 1 18.5 37H0z" fill="#fff"/><path d="M11 16.5h14M11 21.5h14" stroke="#3a6af5" stroke-width="2.6"/></svg>
<svg style="left:0px;top:0px;" width="2400" height="1378" viewBox="0 0 2400 1378" fill="none"><g stroke="#1890ff" stroke-width="6" fill="none"><path d="M792 1290V512H890"/><path d="M864 1290V584H890"/><path d="M1512 1290V682"/></g><g fill="#1890ff"><circle cx="890" cy="512" r="15"/><circle cx="890" cy="584" r="15"/><circle cx="1512" cy="682" r="15"/></g><g fill="#c3e0fd"><circle cx="791.5" cy="1318" r="28"/><circle cx="864" cy="1318" r="28"/><circle cx="1512" cy="1318" r="28"/></g><g fill="#1890ff"><circle cx="791.5" cy="1318" r="20"/><circle cx="864" cy="1318" r="20"/><circle cx="1512" cy="1318" r="20"/></g></svg>
<div class="t" style="left:785.00px;top:1309px;font-size:19px;line-height:19px;color:#ffffff;font-weight:400;letter-spacing:0.000px;">1</div>
<div class="t" style="left:858.50px;top:1309px;font-size:19px;line-height:19px;color:#ffffff;font-weight:400;letter-spacing:0.000px;">2</div>
<div class="t" style="left:1506.50px;top:1309px;font-size:19px;line-height:19px;color:#ffffff;font-weight:400;letter-spacing:0.000px;">3</div>
<div class="t" style="left:263.00px;top:1301px;font-size:37px;line-height:37px;color:#1890ff;font-weight:400;letter-spacing:-0.310px;">Type of use variable in the key</div>
<div class="t" style="left:901.50px;top:1300.7px;font-size:37px;line-height:37px;color:#1890ff;font-weight:400;letter-spacing:-0.345px;">Type of use variable in value</div>
<div class="t" style="left:1548.30px;top:1301.5px;font-size:37px;line-height:37px;color:#1890ff;font-weight:400;letter-spacing:-0.493px;">Select where to add API key</div>
</body></html>
